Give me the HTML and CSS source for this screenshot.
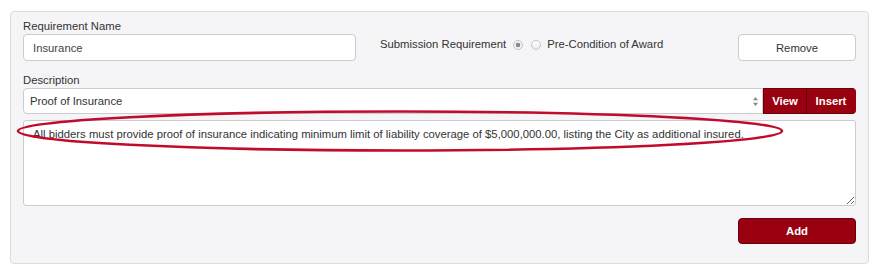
FILE: index.html
```html
<!DOCTYPE html>
<html lang="en">
<head>
<meta charset="UTF-8" />
<meta name="viewport" content="width=device-width, initial-scale=1" />
<title>Requirement</title>
<link rel="stylesheet" href="styles.css">
</head>
<body>
  <form class="requirement-panel">
    <div class="top-row">
      <div class="field name-field">
        <label for="reqName">Requirement Name</label>
        <input type="text" id="reqName" class="text-input" value="Insurance" />
      </div>

      <div class="req-type">
        <span>Submission Requirement</span>
        <input type="radio" name="reqType" class="radio" checked aria-label="Submission Requirement" />
        <input type="radio" name="reqType" class="radio" aria-label="Pre-Condition of Award" />
        <span>Pre-Condition of Award</span>
      </div>

      <button type="button" class="btn btn-light remove-btn">Remove</button>
    </div>

    <div class="field">
      <label for="description">Description</label>
      <div class="select-group">
        <div class="select-wrap">
          <select id="description" class="select-input">
            <option selected>Proof of Insurance</option>
          </select>
          <svg class="select-arrows" width="7" height="11" viewBox="0 0 7 11">
            <path d="M3.5 1 L6 4.2 H1 Z M3.5 10 L6 6.8 H1 Z" fill="#888" />
          </svg>
        </div>
        <button type="button" class="btn btn-red btn-join">View</button>
        <button type="button" class="btn btn-red btn-join btn-last">Insert</button>
      </div>
    </div>

    <textarea class="text-area" aria-label="Requirement text">All bidders must provide proof of insurance indicating minimum limit of liability coverage of $5,000,000.00, listing the City as additional insured.</textarea>

    <div class="actions">
      <button type="button" class="btn btn-red add-btn">Add</button>
    </div>
  </form>

  <!-- hand drawn highlight over the requirement text -->
  <svg class="highlight" width="882" height="275" viewBox="0 0 882 275" aria-hidden="true">
    <ellipse cx="400" cy="131" rx="382" ry="19.5" fill="none" stroke="#c20b2c" stroke-width="2.6" />
  </svg>
</body>
</html>
```

FILE: styles.css
```css
:root {
  --red: #990010;
  --red-dark: #6e000b;
  --text: #333;
  --border: #ccc;
  --font: 'Liberation Sans', Arial, Helvetica, sans-serif;
  --size: 11.3px;
}
* {
  box-sizing: border-box;
}
body {
  margin: 0;
  background: #fff;
  font-family: var(--font);
  font-size: var(--size);
  color: var(--text);
}
.requirement-panel {
  margin: 11px 0 0 10px;
  width: 859px;
  padding: 7px 12px 19px;
  background: #f5f5f7;
  border: 1px solid #dcdcdf;
  border-radius: 4px;
}
label {
  display: block;
  line-height: 15px;
  color: #333;
}
.top-row {
  display: flex;
  align-items: flex-start;
}
.name-field {
  width: 333px;
}
.text-input {
  display: block;
  width: 100%;
  height: 27px;
  padding: 0 9px;
  font-family: var(--font);
  font-size: var(--size);
  color: #444;
  background: #fff;
  border: 1px solid var(--border);
  border-radius: 4px;
}
.req-type {
  display: flex;
  align-items: center;
  margin: 18px 0 0 24px;
  line-height: 15px;
}
.radio {
  appearance: none;
  width: 10px;
  height: 10px;
  margin: 0 0 0 7px;
  border: 1px solid #c4c4c4;
  border-radius: 50%;
  background: linear-gradient(#fff, #ececec);
}
.radio + .radio {
  margin-left: 8px;
  margin-right: 6px;
}
.radio:checked {
  background: radial-gradient(circle, #8a8a8a 0 2px, #f2f2f2 2.6px);
}
.btn {
  font-family: var(--font);
  font-size: var(--size);
  height: 26px;
  padding: 0;
  border-radius: 4px;
  cursor: pointer;
}
.btn-light {
  background: #fff;
  color: #333;
  border: 1px solid var(--border);
}
.remove-btn {
  margin: 15px 0 0 auto;
  width: 118px;
  height: 27px;
}
.btn-red {
  background: var(--red);
  color: #fff;
  font-weight: 700;
  border: 1px solid var(--red-dark);
}
.field + .field,
.top-row + .field {
  margin-top: 12px;
}
.select-group {
  display: flex;
  height: 26px;
}
.select-wrap {
  position: relative;
  width: 740px;
}
.select-input {
  appearance: none;
  width: 100%;
  height: 26px;
  padding: 0 6px;
  font-family: var(--font);
  font-size: var(--size);
  color: #333;
  background: #fff;
  border: 1px solid var(--border);
  border-radius: 4px 0 0 4px;
}
.select-arrows {
  position: absolute;
  right: 4px;
  top: 8px;
}
.btn-join {
  width: 44px;
  border-radius: 0;
  border-right-color: #5a0009;
}
.btn-last {
  width: 49px;
  border-left: none;
  border-right-color: var(--red);
  border-radius: 0 4px 4px 0;
}
.text-area {
  display: block;
  width: 833px;
  height: 86px;
  margin-top: 6px;
  padding: 6px 9px;
  font-family: var(--font);
  font-size: var(--size);
  line-height: 15px;
  color: #333;
  background: #fff;
  border: 1px solid var(--border);
  border-radius: 3px;
  resize: vertical;
}
.actions {
  display: flex;
  justify-content: flex-end;
  margin-top: 12px;
}
.add-btn {
  width: 118px;
}
.highlight {
  position: absolute;
  top: 0;
  left: 0;
  pointer-events: none;
}
```
